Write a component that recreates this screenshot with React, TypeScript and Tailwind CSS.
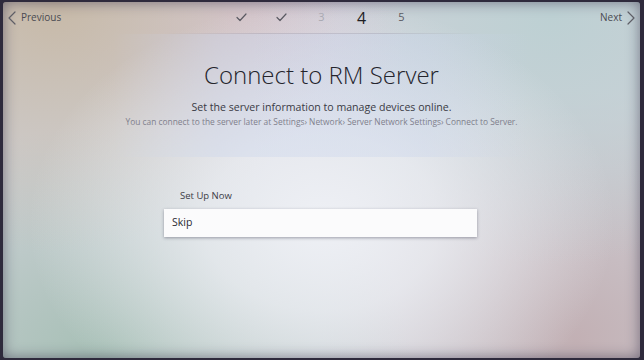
import React from "react";

function Check() {
  return (
    <svg width="11" height="9" viewBox="0 0 11 9" fill="none">
      <path d="M1 4.5 L4 7.5 L10 1" stroke="#5a5a62" strokeWidth="1.2" strokeLinecap="round" strokeLinejoin="round" />
    </svg>
  );
}

function Chevron({ dir }: { dir: "left" | "right" }) {
  return (
    <svg width="8" height="14" viewBox="0 0 8 14" fill="none">
      <path
        d={dir === "left" ? "M7 1 L1 7 L7 13" : "M1 1 L7 7 L1 13"}
        stroke="#5e5e66"
        strokeWidth="1.2"
        strokeLinecap="round"
        strokeLinejoin="round"
      />
    </svg>
  );
}

export default function App() {
  return (
    <div className="w-[644px] h-[360px] overflow-hidden bg-[#2e2a3c] [font-family:'Open_Sans','Noto_Sans',sans-serif]">
      <div className="w-[637px] h-[356px] ml-[3px] mt-[2px] rounded-[3px] bg-[radial-gradient(ellipse_46%_62%_at_50%_62%,#eef0f5_0%,rgba(238,240,245,0.75)_40%,rgba(238,240,245,0)_100%),radial-gradient(ellipse_45%_70%_at_8%_0%,#c7b9a7_0%,rgba(199,185,167,0)_100%),radial-gradient(ellipse_28%_40%_at_36%_4%,#d8c8d8_0%,rgba(216,200,216,0)_100%),radial-gradient(ellipse_45%_70%_at_86%_4%,#bdd0d3_0%,rgba(189,208,211,0)_100%),radial-gradient(ellipse_48%_65%_at_16%_100%,#a6bfb5_0%,rgba(166,191,181,0)_100%),radial-gradient(ellipse_40%_70%_at_90%_95%,#c2b0b4_0%,rgba(194,176,180,0)_100%),linear-gradient(#d0d2d9,#d0d2d9)] shadow-[inset_0_0_14px_rgba(50,44,70,0.55)] flex flex-col">
        {/* header */}
        <div className="grid grid-cols-[1fr_auto_1fr] items-center h-[31px]">
          <div className="flex items-center gap-[5px] pl-[5px] text-[10px] text-[#4a4a52]">
            <Chevron dir="left" />
            <span>Previous</span>
          </div>
          <div className="flex items-center">
            <div className="w-10 flex justify-center"><Check /></div>
            <div className="w-10 flex justify-center"><Check /></div>
            <div className="w-10 flex justify-center text-[11px] text-[#a9a9b2]">3</div>
            <div className="w-10 flex justify-center text-[16px] text-[#1e1e24]">4</div>
            <div className="w-10 flex justify-center text-[11px] text-[#5a5a62]">5</div>
          </div>
          <div className="flex items-center justify-end gap-[5px] pr-[5px] text-[10px] text-[#4a4a52]">
            <span>Next</span>
            <Chevron dir="right" />
          </div>
        </div>
        <div className="h-px mx-[160px] bg-[linear-gradient(90deg,rgba(150,150,170,0),rgba(150,150,170,0.35)_30%,rgba(150,150,170,0.35)_70%,rgba(150,150,170,0))]" />

        {/* title band */}
        <div className="flex flex-col items-center pt-[26px] pb-[30px] mx-[110px] bg-[linear-gradient(90deg,rgba(200,212,236,0),rgba(200,212,236,0.35)_25%,rgba(200,212,236,0.35)_75%,rgba(200,212,236,0))]">
          <h1 className="text-[24px] leading-[30px] font-light text-[#24242c]">Connect to RM Server</h1>
          <p className="mt-[10px] text-[10.6px] leading-[14px] text-[#3a3a44]">
            Set the server information to manage devices online.
          </p>
          <p className="mt-[2px] text-[8.4px] leading-[11px] text-[#80808c] whitespace-nowrap">
            You can connect to the server later at Settings› Network› Server Network Settings› Connect to Server.
          </p>
        </div>

        {/* options */}
        <div className="flex flex-col ml-[161px] w-[313px] mt-[31px]">
          <div className="pl-[16px] h-[16px] flex items-center text-[9.5px] text-[#3c3c46]">Set Up Now</div>
          <div className="mt-[5px] h-[28px] bg-[#fbfbfc] shadow-[0_1px_3px_rgba(60,60,80,0.45)] flex items-center pl-[8px] text-[10.5px] text-[#2a2a32]">
            Skip
          </div>
        </div>
      </div>
    </div>
  );
}
